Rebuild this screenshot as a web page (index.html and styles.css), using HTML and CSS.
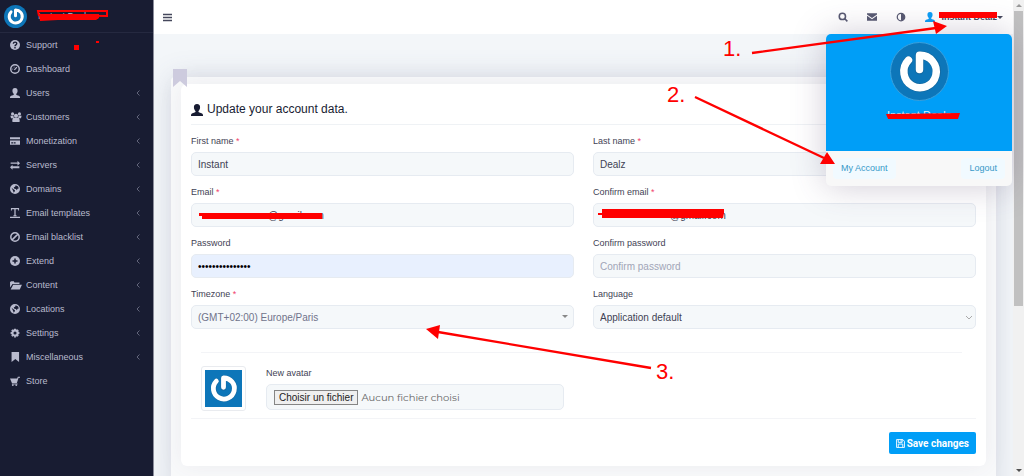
FILE: index.html
```html
<!DOCTYPE html>
<html lang="en">
<head>
<meta charset="utf-8">
<title>My account</title>
<link rel="stylesheet" href="styles.css">
</head>
<body>
<svg class="sprite" aria-hidden="true">
  <symbol id="power" viewBox="-88 -88 176 176"><path d="M-34-34A50 50 0 1 0 0-50V-4" fill="none" stroke="#1c5a86" stroke-opacity=".45" stroke-width="27" stroke-linecap="round" stroke-linejoin="round"/><path d="M-34-35A50 50 0 1 0 0-50V-6" fill="none" stroke="#fff" stroke-width="23" stroke-linecap="round" stroke-linejoin="round"/></symbol>
  <symbol id="user" viewBox="0 0 16 16"><path d="M8 0C5.200 0 3.600 1.800 3.900 4.600c.1 2.200 1.100 3.800 2.100 4.600v1.500C5 11.700.8 12 0 14.200V16h16v-1.800c-.8-2.200-5-2.500-6-3.500V9.200c1-.8 2-2.400 2.100-4.600C12.400 1.800 10.800 0 8 0z"/></symbol>
  <symbol id="globe" viewBox="0 0 16 16"><path fill-rule="evenodd" d="M8 0a8 8 0 1 0 0 16A8 8 0 0 0 8 0zM9 2l4 2 1 3-2 .5-1 2.500-1.500-2L7 7.500 6 5.500 8.500 4zM2.500 6l2 1.500 3 2L8 11l-2 3-1-3z"/></symbol>
  <symbol id="left" viewBox="0 0 6 8"><path d="M4.500 1.500 2 4l2.500 2.500" fill="none" stroke="currentColor"/></symbol>
</svg>
<div class="app">
  <aside class="sidebar">
    <a class="brand" href="#"><svg class="brand-logo"><use href="#power"/></svg><span>Instant Dealz</span></a>
    <nav>
      <a href="#"><svg viewBox="0 0 16 16"><circle cx="8" cy="8" r="8"/><path d="M5.300 6C5.500 2.600 11 2.700 10.800 6 10.700 7.800 8 7.800 8 9.800M8 11v2.400" fill="none" stroke="#181c32" stroke-width="2.200"/></svg><span>Support</span></a>
      <a href="#"><svg viewBox="0 0 16 16"><circle cx="8" cy="8" r="6.800" fill="none" stroke="currentColor" stroke-width="2.300"/><path d="M7 9.500 11 5M4 8h1M6 5h1" fill="none" stroke="currentColor" stroke-width="2"/></svg><span>Dashboard</span></a>
      <a href="#"><svg viewBox="0 0 16 16"><use href="#user"/></svg><span>Users</span><svg class="chev"><use href="#left"/></svg></a>
      <a href="#"><svg class="wide" viewBox="0 0 18 16"><circle cx="3.500" cy="3" r="2.500"/><circle cx="14.500" cy="3" r="2.500"/><circle cx="9" cy="6" r="3.300"/><path d="M0 6h5l.5 4H1zM13 6h5l-1 4h-4.500zM3 15c0-4 1-6 3-6h6c2 0 3 2 3 6l-1 1H4z"/></svg><span>Customers</span><svg class="chev"><use href="#left"/></svg></a>
      <a href="#"><svg viewBox="0 0 16 16"><path fill-rule="evenodd" d="M0 2h16v3H0zM0 7h16v7H0zM2 10v2h3v-2zM6 10v2h3v-2z"/></svg><span>Monetization</span><svg class="chev"><use href="#left"/></svg></a>
      <a href="#"><svg viewBox="0 0 16 16"><path d="M1 4h11V1l4 4-4 4V6H1zM15 10H4V7.500L0 11.500l4 4V13h11z"/></svg><span>Servers</span><svg class="chev"><use href="#left"/></svg></a>
      <a href="#"><svg><use href="#globe"/></svg><span>Domains</span><svg class="chev"><use href="#left"/></svg></a>
      <a href="#"><svg viewBox="0 0 16 16"><path d="M1.500 0h13v4h-1.500V2H9v9.500h1.500V13h-5v-1.500H7V2H3v2H1.500zM0 14h16v2H0z"/></svg><span>Email templates</span><svg class="chev"><use href="#left"/></svg></a>
      <a href="#"><svg viewBox="0 0 16 16"><path d="M13 3 3 13M8 1.300a6.700 6.700 0 1 0 0 13.400A6.700 6.700 0 0 0 8 1.300" fill="none" stroke="currentColor" stroke-width="2.400"/></svg><span>Email blacklist</span><svg class="chev"><use href="#left"/></svg></a>
      <a href="#"><svg viewBox="0 0 16 16"><circle cx="8" cy="8" r="8"/><path d="M8 4v8M4 8h8" stroke="#181c32" stroke-width="2.400"/></svg><span>Extend</span><svg class="chev"><use href="#left"/></svg></a>
      <a href="#"><svg class="wide" viewBox="0 0 19 16"><path d="M0 12V3l2-1h4l1 2h8v2.500H4zM5 7.500h14L15.500 15H1z"/></svg><span>Content</span><svg class="chev"><use href="#left"/></svg></a>
      <a href="#"><svg><use href="#globe"/></svg><span>Locations</span><svg class="chev"><use href="#left"/></svg></a>
      <a href="#"><svg viewBox="0 0 16 16"><circle cx="8" cy="8" r="4.200" fill="none" stroke="currentColor" stroke-width="3.400"/><path d="M8 1v2M8 13v2M1 8h2M13 8h2M3 3l1.500 1.500M11.500 11.500 13 13M13 3l-1.500 1.500M3 13l1.500-1.500" stroke="currentColor" stroke-width="3"/></svg><span>Settings</span><svg class="chev"><use href="#left"/></svg></a>
      <a href="#"><svg viewBox="0 0 16 16"><path d="M2.500 0h12v16l-6-5-6 5z"/></svg><span>Miscellaneous</span><svg class="chev"><use href="#left"/></svg></a>
      <a href="#"><svg viewBox="0 0 16 16"><path d="M0 4h11.500L12.500 1H16v1.600h-2.300L11 11H3z"/><path d="M3 12h9v1.500H3z"/><circle cx="4.500" cy="14.500" r="1.500"/><circle cx="10" cy="14.500" r="1.500"/></svg><span>Store</span></a>
    </nav>
  </aside>

  <div class="page">
    <header class="topbar">
      <button class="menu" type="button" aria-label="Toggle menu"><svg viewBox="0 0 9 9"><path d="M0 1.500h9M0 4.500h9M0 7.500h9" stroke="currentColor" stroke-width="1.500"/></svg></button>
      <div class="tools">
        <button type="button" aria-label="Search"><svg viewBox="0 0 16 16"><path d="M10.500 10.500l4.500 4.500M7 2a5 5 0 1 0 0 10A5 5 0 0 0 7 2" fill="none" stroke="currentColor" stroke-width="2.500"/></svg></button>
        <button type="button" aria-label="Messages"><svg viewBox="0 0 16 16"><path d="M0 2h16v2L8 9.500 0 4zM0 6l8 5.500L16 6v8H0z"/></svg></button>
        <button type="button" aria-label="Theme"><svg viewBox="0 0 16 16"><circle cx="8" cy="8" r="6" fill="none" stroke="currentColor" stroke-width="2"/><path d="M8 2a6 6 0 0 1 0 12z"/></svg></button>
        <button class="account" type="button"><svg><use href="#user"/></svg><span>Instant Dealz</span><i class="caret"></i></button>
      </div>
      <div class="dropdown">
        <div class="profile"><svg class="portrait"><use href="#power"/></svg><span>Instant Dealz</span></div>
        <div class="profile-actions"><a href="#">My Account</a><a href="#">Logout</a></div>
      </div>
    </header>

    <main class="content">
      <div class="panel">
        <svg class="ribbon" viewBox="0 0 14 18"><path d="M0 0h14v18L7 12l-7 6z"/></svg>
        <form class="card">
          <h1><svg><use href="#user"/></svg>Update your account data.</h1>
          <div class="fields">
            <div class="field"><label for="first">First name <em>*</em></label><input id="first" type="text" value="Instant"></div>
            <div class="field"><label for="last">Last name <em>*</em></label><input id="last" type="text" value="Dealz"></div>
            <div class="field"><label for="email">Email <em>*</em></label><input id="email" class="masked" type="text" value="@gmail.com"></div>
            <div class="field"><label for="email2">Confirm email <em>*</em></label><input id="email2" class="masked" type="text" value="@gmail.com"></div>
            <div class="field"><label for="pass">Password</label><input id="pass" class="autofill" type="password" value="xxxxxxxxxxxxxxx"></div>
            <div class="field"><label for="pass2">Confirm password</label><input id="pass2" type="password" placeholder="Confirm password"></div>
            <div class="field"><label for="zone">Timezone <em>*</em></label><div class="select"><select id="zone" class="zone"><option>(GMT+02:00) Europe/Paris</option></select><i class="caret"></i></div></div>
            <div class="field"><label for="lang">Language</label><div class="select"><select id="lang"><option>Application default</option></select><svg class="down" viewBox="0 0 8 5"><path d="M1 1l3 3 3-3" fill="none" stroke="currentColor"/></svg></div></div>
          </div>
          <div class="avatar-row">
            <div class="thumb"><svg><use href="#power"/></svg></div>
            <div class="field upload">
              <label for="avatar">New avatar</label>
              <div class="file"><span class="file-button">Choisir un fichier</span><span class="file-name">Aucun fichier choisi</span><input id="avatar" type="file"></div>
            </div>
          </div>
          <div class="actions"><button type="submit"><svg viewBox="0 0 16 16"><path d="M1 1h11l3 3v11H1zM4 1v5h7V1M4 15V9h8v6M9 2v3" fill="none" stroke="currentColor" stroke-width="1.600"/></svg>Save changes</button></div>
        </form>
      </div>
    </main>
  </div>

  <div class="scrollbar" aria-hidden="true"><i class="up"></i><div class="scroll-thumb"></div><i class="end"></i></div>
</div>

<svg class="notes" viewBox="0 0 1024 476">
  <g fill="none" stroke="#f00" stroke-width="2.300">
    <path d="M752 53 936 28M695 97l129 61M651 368 438 332"/>
    <path d="M39 16l-1-5h69v5l-68-1M40 18h58" stroke-width="2"/>
  </g>
  <g fill="#f00">
    <path d="M933 21l14 5-11 8zM827 152l8 12h-15zM426 329l14-4-2 14z"/>
    <path d="M39 14h60v4l-3 2H58l-18 1zM74 45h5v5h-5zM96 41h3v2h-3z"/>
    <path d="M939 12h58v6h-58zM886 114l74-1-2 6h-70z"/>
    <path d="M199 213h123v6H202v-3h-3zM598 213h4v-4h122v4l-1 5H602v-3h-4z"/>
  </g>
  <g class="note-numbers"><text x="723" y="56">1.</text><text x="667" y="102">2.</text><text x="656" y="379">3.</text></g>
</svg>
</body>
</html>
```
FILE: styles.css
```css
* { box-sizing: border-box; }
body { margin: 0; font: 9px/13px "Liberation Sans", Arial, sans-serif; color: #3f4254; }
a { color: inherit; text-decoration: none; }
svg { fill: currentColor; }
button, input, select { font: inherit; color: inherit; }
button { border: 0; padding: 0; background: none; display: flex; align-items: center; }
.sprite { position: absolute; width: 0; height: 0; }
.app { display: flex; height: 100vh; overflow: hidden; }

.sidebar { flex: 0 0 154px; background: #181c32; border-right: 1px solid #8b8d9b; color: #b9bbce; }
.brand { display: flex; align-items: center; gap: 11px; height: 33px; padding-left: 4px; border-bottom: 1px solid #252940; }
.brand-logo { width: 23px; height: 23px; border-radius: 50%; background: #0d76b9; }
.sidebar nav a { display: flex; align-items: center; height: 24px; padding: 0 12px 0 10px; }
.sidebar nav span { flex: 1; }
.sidebar nav svg { width: 10px; height: 10px; margin-right: 6px; }
.sidebar nav .wide { width: 12px; margin-right: 4px; }
.sidebar nav .chev { width: 6px; height: 8px; margin: 0; color: #62657b; }

.page { flex: 1; display: flex; flex-direction: column; min-width: 0; }
.topbar { position: relative; z-index: 2; flex: none; display: flex; align-items: center; justify-content: space-between; height: 34px; padding: 0 10px 0 9px; background: #fff; }
.menu { color: #45485c; }
.menu svg { width: 9px; height: 9px; }
.tools { display: flex; align-items: center; gap: 19px; color: #585a72; }
.tools svg { width: 10px; height: 10px; }
.account { gap: 6px; color: #45485c; font-weight: 700; }
.account svg { color: #0b9ef7; }
.caret { border: 3px solid transparent; border-top-color: currentColor; border-bottom: 0; }
.account .caret { margin-left: -6px; }

.dropdown { position: absolute; top: 34px; right: 1px; width: 186px; border-radius: 5px; overflow: hidden; background: #f8f8f8; box-shadow: 0 0 34px rgba(82, 63, 105, .28); }
.profile { display: flex; flex-direction: column; align-items: center; gap: 8px; height: 117px; padding-top: 8px; background: #009ef7; color: #d9f0ff; font-size: 11px; }
.portrait { width: 59px; height: 59px; border: 1px solid #3aa0dc; border-radius: 50%; background: #0d76b9; }
.profile-actions { display: flex; justify-content: space-between; padding: 7px; color: #3699c9; }
.profile-actions a { padding: 4px 8px; border-radius: 4px; background: #f1faff; }

.content { flex: 1; min-height: 0; padding: 43px 17px 0; overflow: hidden; background: #f3f6f9; }
.panel { position: relative; height: 100vh; padding: 7px 10px; border-radius: 4px; background: #f9fafb; box-shadow: 0 0 28px rgba(82, 90, 120, .18); }
.ribbon { position: absolute; z-index: 1; top: -8px; left: 2px; width: 14px; height: 18px; color: #cdcbde; }
.card { padding: 0 10px 12px; border-radius: 6px; background: #fff; box-shadow: 0 0 24px rgba(82, 63, 105, .08); }
h1 { display: flex; align-items: center; gap: 4px; height: 41px; margin: 0; padding-top: 11px; border-bottom: 1px solid #eff2f5; font-size: 12px; font-weight: 400; color: #181c32; }
h1 svg { width: 12px; height: 12px; }
.fields { display: grid; grid-template-columns: 1fr 1fr; gap: 10px 19px; padding: 10px 0 23px; }
.field label { display: block; margin-bottom: 4px; }
.field em { color: #f1416c; font-style: normal; }
.field input, .field select { display: block; width: 100%; height: 24px; padding: 0 6px; border: 1px solid #e6ebf1; border-radius: 5px; background: #f5f8fa; font-size: 10px; appearance: none; }
.field input::placeholder { color: #a1a5b7; }
.field .masked { padding-left: 76px; }
.field .autofill { background: #e8f0fe; color: #000; }
.field .zone { color: #70738a; }
.select { position: relative; }
.select .caret { position: absolute; right: 6px; top: 10px; color: #888; }
.down { position: absolute; right: 3px; top: 10px; width: 8px; height: 5px; color: #aaa; }

.avatar-row { display: flex; gap: 20px; margin: 0 14px 0 10px; padding: 13px 0 7px; border-top: 1px solid #f3f4f7; }
.thumb { padding: 3px; border: 1px solid #e9ebef; border-radius: 3px; }
.thumb svg { display: block; width: 37px; height: 37px; background: #0d76b9; }
.upload { flex: 0 1 298px; padding-top: 1px; }
.file { position: relative; display: flex; align-items: center; gap: 3px; height: 26px; padding: 0 7px; border: 1px solid #e6ebf1; border-radius: 5px; background: #f5f8fa; }
.file-button { padding: 0 4px; border: 1px solid #858585; background: #efefef; color: #222; font-size: 10px; }
.file-name { font: 10px/13px Montserrat, Inter, sans-serif; color: #666; }
.file input { position: absolute; inset: 0; height: 100%; opacity: 0; }
.actions { display: flex; justify-content: flex-end; padding-top: 13px; border-top: 1px solid #f3f4f7; }
.actions button { gap: 2px; height: 22px; padding: 0 7px; border-radius: 2px; background: #009ef7; color: #fff; font: 700 10px/13px Roboto, sans-serif; }
.actions svg { width: 9px; height: 9px; }

.scrollbar { flex: 0 0 11px; display: flex; flex-direction: column; align-items: center; padding: 4px 0; background: #f1f1f1; }
.up { border: 3px solid transparent; border-top: 0; border-bottom-color: #999; }
.scroll-thumb { width: 9px; height: 63%; margin-top: 4px; background: #c1c1c1; }
.end { margin-top: auto; border: 3px solid transparent; border-bottom: 0; border-top-color: #505050; }

.notes { position: absolute; z-index: 5; top: 0; left: 0; width: 1024px; height: 476px; pointer-events: none; }
.note-numbers { fill: #f00; font-size: 22px; }
```
